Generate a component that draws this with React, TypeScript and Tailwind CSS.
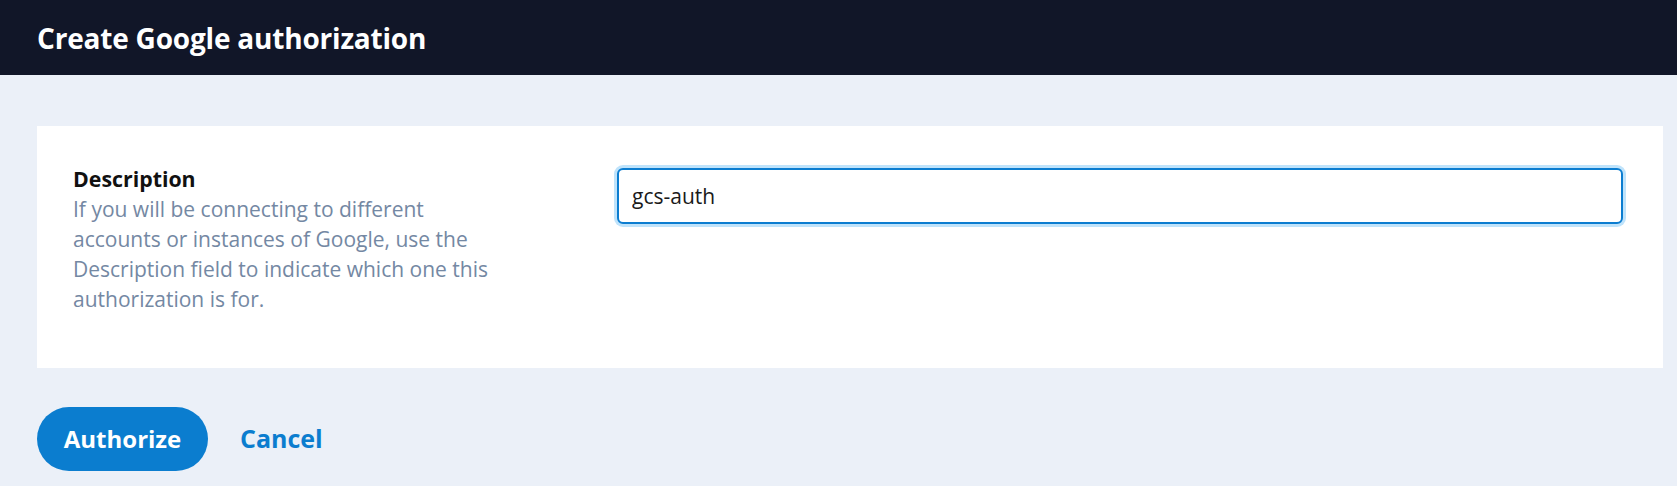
import React from "react";

export default function App() {
	return (
		<div className="min-h-[486px] bg-[#ebf0f8] font-['Open_Sans',sans-serif]">
			{/* Header */}
			<header className="flex h-[75px] items-center bg-[#111628] px-[37px]">
				<h1 className="text-[28px] font-bold leading-none tracking-[-0.2px] text-white">
					Create Google authorization
				</h1>
			</header>

			<main className="px-[37px] pr-[14px] pt-[51px]">
				{/* Card */}
				<section className="flex bg-white pb-[54px] pl-[36px] pr-[40px] pt-[38px]">
					<div className="w-[508px] shrink-0 pr-[70px]">
						<label
							htmlFor="description"
							className="block text-[21.33px] font-bold leading-[30px] text-[#111111]">
							Description
						</label>
						<p className="text-[21px] leading-[30px] text-[#7488a3]">
							If you will be connecting to different accounts or instances of
							Google, use the Description field to indicate which one this
							authorization is for.
						</p>
					</div>
					<div className="ml-[36px] flex-1 pt-[4px]">
						<input
							id="description"
							type="text"
							defaultValue="gcs-auth"
							className="h-[56px] w-full rounded-[6px] border-2 border-[#0c7dd0] bg-white px-[13px] text-[21px] text-[#1a1a1a] outline-none ring-[3px] ring-[#bfe3fb]"
						/>
					</div>
				</section>

				{/* Actions */}
				<div className="flex items-center gap-[32px] pb-[14px] pt-[39px]">
					<button
						type="button"
						className="h-[64px] w-[171px] rounded-full bg-[#0b7dcf] text-[24px] font-bold text-white">
						Authorize
					</button>
					<button type="button" className="text-[25px] font-bold text-[#0b7dcf]">
						Cancel
					</button>
				</div>
			</main>
		</div>
	);
}
